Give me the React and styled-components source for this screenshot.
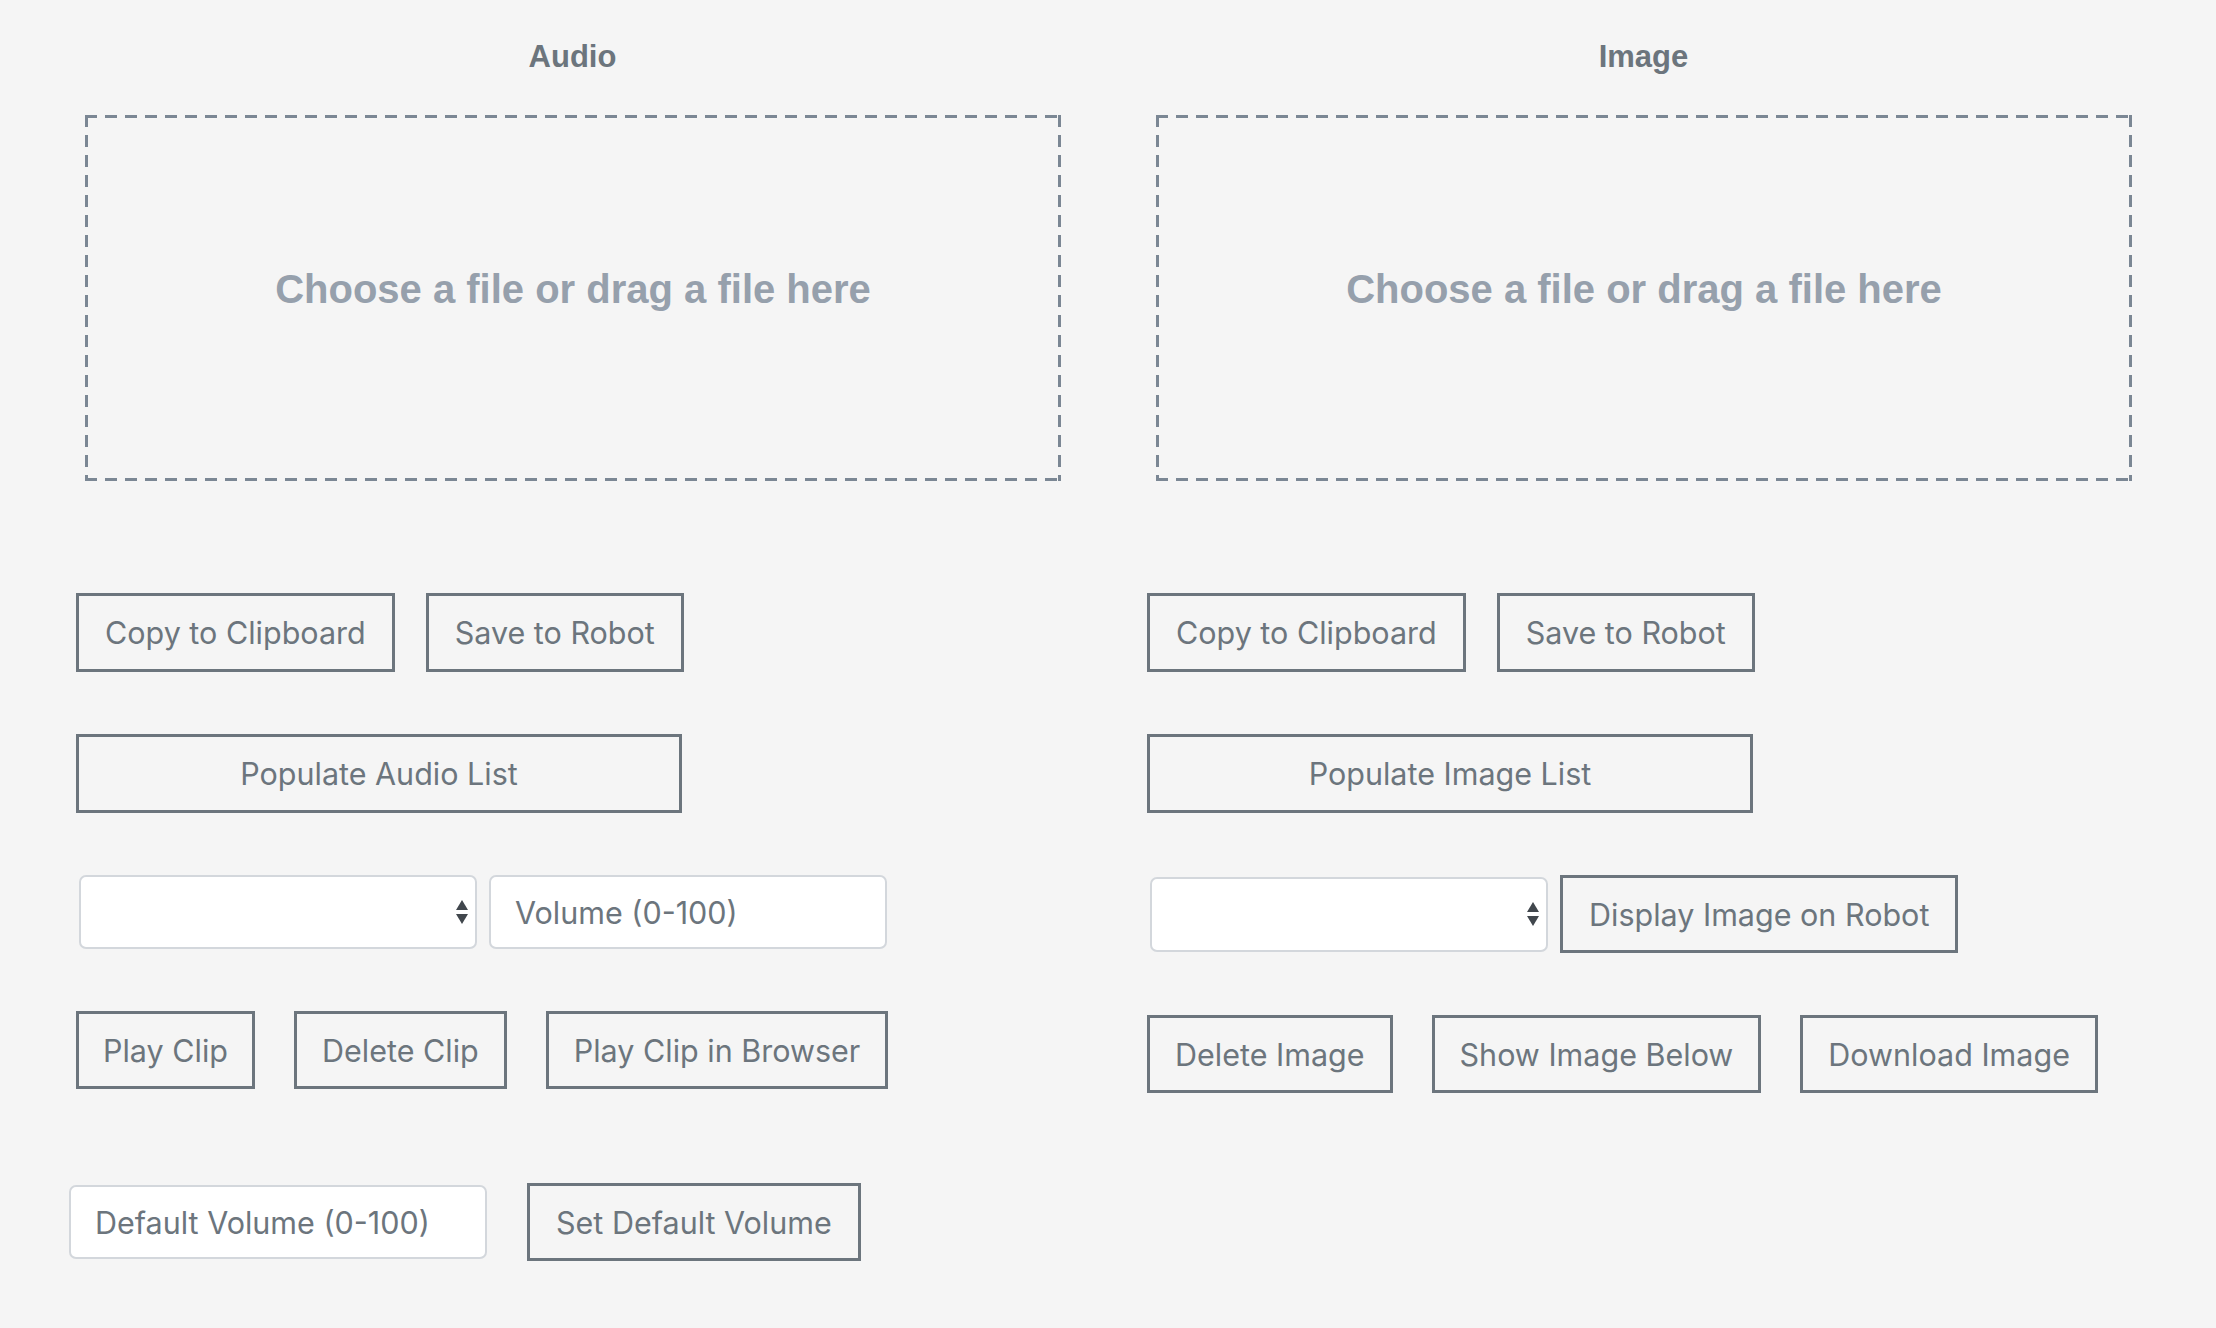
import React from "react";
import styled, { createGlobalStyle } from "styled-components";

const GlobalStyle = createGlobalStyle`
  html, body {
    margin: 0;
    padding: 0;
    background: #f5f5f5;
  }
  * {
    box-sizing: border-box;
  }
`;

const dash = "#7b8794";

const Page = styled.main`
  display: grid;
  grid-template-columns: 1fr 1fr;
  padding: 0 37px;
  min-height: 1328px;
`;

const Column = styled.section`
  display: flex;
  flex-direction: column;
`;

const Title = styled.h2`
  margin: 39px 0 40px;
  font-family: "Liberation Sans", Arial, sans-serif;
  font-size: 31px;
  line-height: 36px;
  font-weight: 700;
  color: #6c757d;
  text-align: center;
`;

/* dashes drawn with gradients so the 12px dash / 8px gap matches */
const DropZone = styled.label`
  display: flex;
  align-items: center;
  justify-content: center;
  margin: 0 47px 0 48px;
  height: 366px;
  padding-bottom: 18px;
  cursor: pointer;
  background:
    repeating-linear-gradient(to right, ${dash} 0 12px, transparent 12px 20px) top left / 100% 3px no-repeat,
    repeating-linear-gradient(to right, ${dash} 0 12px, transparent 12px 20px) bottom left / 100% 3px no-repeat,
    repeating-linear-gradient(to bottom, ${dash} 0 12px, transparent 12px 20px) top left / 3px 100% no-repeat,
    repeating-linear-gradient(to bottom, ${dash} 0 12px, transparent 12px 20px) top right / 3px 100% no-repeat;
`;

const DropText = styled.span`
  font-family: "Liberation Sans", Arial, sans-serif;
  font-size: 40px;
  font-weight: 700;
  color: #96a0ac;
`;

const Controls = styled.div`
  display: flex;
  flex-direction: column;
  gap: 62px;
  margin-top: 112px;
  padding-left: 39px;
`;

const Row = styled.div`
  display: flex;
  align-items: center;
  gap: ${(p) => p.$gap || 40}px;
  margin-top: ${(p) => p.$offset || 0}px;
  margin-left: ${(p) => p.$shift || 0}px;
`;

const Button = styled.button`
  height: ${(p) => p.$h || 79}px;
  width: ${(p) => (p.$width ? `${p.$width}px` : "auto")};
  padding: 0 ${(p) => p.$pad || 26}px;
  background: transparent;
  border: 3px solid #6c757d;
  border-radius: 0;
  color: #6c757d;
  font-family: Inter, "Noto Sans", sans-serif;
  font-size: 30.5px;
  font-weight: 400;
  white-space: nowrap;
  cursor: pointer;
`;

const Field = styled.input`
  width: ${(p) => p.$width || 398}px;
  height: 74px;
  padding: 0 24px;
  background: #fff;
  border: 2px solid #d3d7dc;
  border-radius: 7px;
  font-family: Inter, "Noto Sans", sans-serif;
  font-size: 30.5px;
  color: #495057;
  outline: none;

  &::placeholder {
    color: #6c757d;
  }
`;

const SelectWrap = styled.div`
  position: relative;
  width: 398px;
  height: ${(p) => p.$h || 74}px;
  margin-left: 3px;
`;

const Select = styled.select`
  appearance: none;
  width: 100%;
  height: 100%;
  padding: 0 24px;
  background: #fff;
  border: 2px solid #d3d7dc;
  border-radius: 7px;
  font-family: Inter, "Noto Sans", sans-serif;
  font-size: 30.5px;
  color: #495057;
`;

const Arrows = styled.svg`
  position: absolute;
  right: 8px;
  top: 50%;
  transform: translateY(-50%);
  pointer-events: none;
`;

const SelectBox = ({ h }) => (
  <SelectWrap $h={h}>
    <Select defaultValue="">
      <option value="" />
    </Select>
    <Arrows width="14" height="26" viewBox="0 0 14 26">
      <path d="M7 1 L13 11 L1 11 Z" fill="#41474d" />
      <path d="M7 25 L13 15 L1 15 Z" fill="#41474d" />
    </Arrows>
  </SelectWrap>
);

const App = () => (
  <>
    <GlobalStyle />
    <Page>
      <Column>
        <Title>Audio</Title>
        <DropZone>
          <DropText>Choose a file or drag a file here</DropText>
        </DropZone>
        <Controls>
          <Row $gap={31}>
            <Button>Copy to Clipboard</Button>
            <Button>Save to Robot</Button>
          </Row>
          <Row>
            <Button $width={606}>Populate Audio List</Button>
          </Row>
          <Row $gap={12}>
            <SelectBox />
            <Field placeholder="Volume (0-100)" />
          </Row>
          <Row $gap={39}>
            <Button $h={78} $pad={24}>Play Clip</Button>
            <Button $h={78} $pad={25}>Delete Clip</Button>
            <Button $h={78} $pad={25}>Play Clip in Browser</Button>
          </Row>
          <Row $gap={40} $offset={32} $shift={-7}>
            <Field $width={418} placeholder="Default Volume (0-100)" />
            <Button $h={78}>Set Default Volume</Button>
          </Row>
        </Controls>
      </Column>

      <Column>
        <Title>Image</Title>
        <DropZone>
          <DropText>Choose a file or drag a file here</DropText>
        </DropZone>
        <Controls>
          <Row $gap={31}>
            <Button>Copy to Clipboard</Button>
            <Button>Save to Robot</Button>
          </Row>
          <Row>
            <Button $width={606}>Populate Image List</Button>
          </Row>
          <Row $gap={12}>
            <SelectBox h={75} />
            <Button $h={78}>Display Image on Robot</Button>
          </Row>
          <Row $gap={39}>
            <Button $h={78} $pad={25}>Delete Image</Button>
            <Button $h={78} $pad={25}>Show Image Below</Button>
            <Button $h={78} $pad={25}>Download Image</Button>
          </Row>
        </Controls>
      </Column>
    </Page>
  </>
);

export default App;
